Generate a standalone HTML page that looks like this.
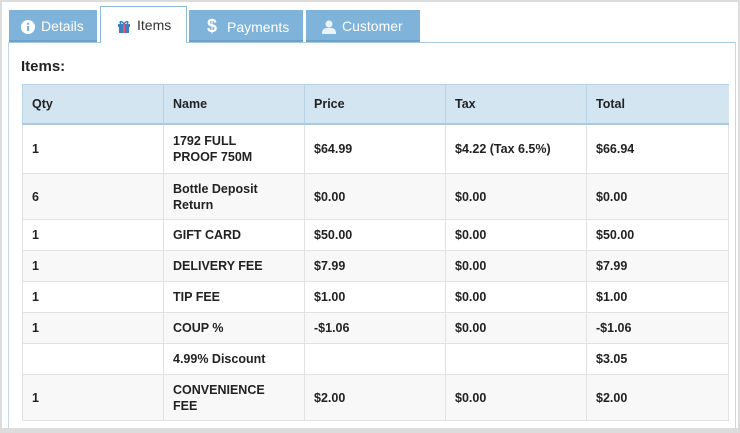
<!DOCTYPE html>
<html><head><meta charset="utf-8"><style>
*{box-sizing:border-box;margin:0;padding:0}
body{width:740px;height:433px;background:#fff;font-family:"Liberation Sans",Arial,sans-serif;position:relative;overflow:hidden;border:2px solid #dcdcdc;border-bottom:none}
.bot{position:absolute;left:0;right:0;bottom:0;height:5px;background:#dcdcdc}
.panel{position:absolute;left:6px;top:40px;width:728px;height:387px;border:1px solid #c5d9e8;border-top:1px solid #a9c9e2}
.tab{position:absolute;height:32px;top:8px;background:#7fb3d9;color:#fff;font-size:14px;line-height:32px;border-bottom:2px solid #6aa2cc}
.tab svg{vertical-align:-3px;margin-right:6px}
.act{top:4px;height:37px;background:#fff;color:#333;border:1px solid #8dbbdc;border-bottom:none;line-height:36px}
h3{position:absolute;left:19px;top:56px;font-size:15px;font-weight:bold;color:#222}
table{position:absolute;left:20px;top:82px;width:707px;border-collapse:collapse;font-size:12.5px;font-weight:bold;color:#222}
th{background:#d2e5f1;text-align:left;height:39px;padding:0 9px;border-left:1px solid #b7d3e7;border-bottom:2px solid #a9c9e2;border-top:1px solid #b7d3e7}
td{padding:0 9px;border:1px solid #e2e2e2;line-height:16px}
tr:nth-child(odd) td{background:#f8f8f8}
</style></head><body>
<div class="panel"></div>
<div class="tab" style="left:7px;width:88px;padding-left:12px"><svg width="14" height="14" viewBox="0 0 14 14"><circle cx="7" cy="7" r="7" fill="#fff"/><rect x="6" y="6" width="2.2" height="5" fill="#7fb3d9"/><circle cx="7.1" cy="3.8" r="1.2" fill="#7fb3d9"/></svg>Details</div>
<div class="tab act" style="left:98px;width:87px;padding-left:16px"><svg width="14" height="13" viewBox="0 0 14 13"><rect x="1" y="4" width="12" height="3" fill="#3a7fc0"/><rect x="2" y="7" width="10" height="6" fill="#3a7fc0"/><rect x="6" y="4" width="2" height="9" fill="#e57"/><path d="M7 4C4 0 2 2 4 4M7 4C10 0 12 2 10 4" stroke="#3a7fc0" fill="none" stroke-width="1.5"/></svg>Items</div>
<div class="tab" style="left:187px;width:114px;padding-left:18px"><span style="font-size:18px;font-weight:bold;margin-right:10px">$</span>Payments</div>
<div class="tab" style="left:304px;width:114px;padding-left:16px"><svg width="14" height="14" viewBox="0 0 14 14"><circle cx="7" cy="4" r="3.5" fill="#eaf3fa"/><path d="M0 14C0 8 3 8 7 8S14 8 14 14Z" fill="#eaf3fa"/></svg>Customer</div>
<h3>Items:</h3>
<table>
<colgroup><col style="width:141px"><col style="width:141px"><col style="width:141px"><col style="width:141px"><col></colgroup>
<tr><th>Qty</th><th>Name</th><th>Price</th><th>Tax</th><th>Total</th></tr>
<tr style="height:50px"><td>1</td><td>1792 FULL<br>PROOF 750M</td><td>$64.99</td><td>$4.22 (Tax 6.5%)</td><td>$66.94</td></tr>
<tr style="height:46px"><td>6</td><td>Bottle Deposit<br>Return</td><td>$0.00</td><td>$0.00</td><td>$0.00</td></tr>
<tr style="height:31px"><td>1</td><td>GIFT CARD</td><td>$50.00</td><td>$0.00</td><td>$50.00</td></tr>
<tr style="height:31px"><td>1</td><td>DELIVERY FEE</td><td>$7.99</td><td>$0.00</td><td>$7.99</td></tr>
<tr style="height:31px"><td>1</td><td>TIP FEE</td><td>$1.00</td><td>$0.00</td><td>$1.00</td></tr>
<tr style="height:31px"><td>1</td><td>COUP %</td><td>-$1.06</td><td>$0.00</td><td>-$1.06</td></tr>
<tr style="height:31px"><td></td><td>4.99% Discount</td><td></td><td></td><td>$3.05</td></tr>
<tr style="height:46px"><td>1</td><td>CONVENIENCE<br>FEE</td><td>$2.00</td><td>$0.00</td><td>$2.00</td></tr>
</table>
<div class="bot"></div>
</body></html>
